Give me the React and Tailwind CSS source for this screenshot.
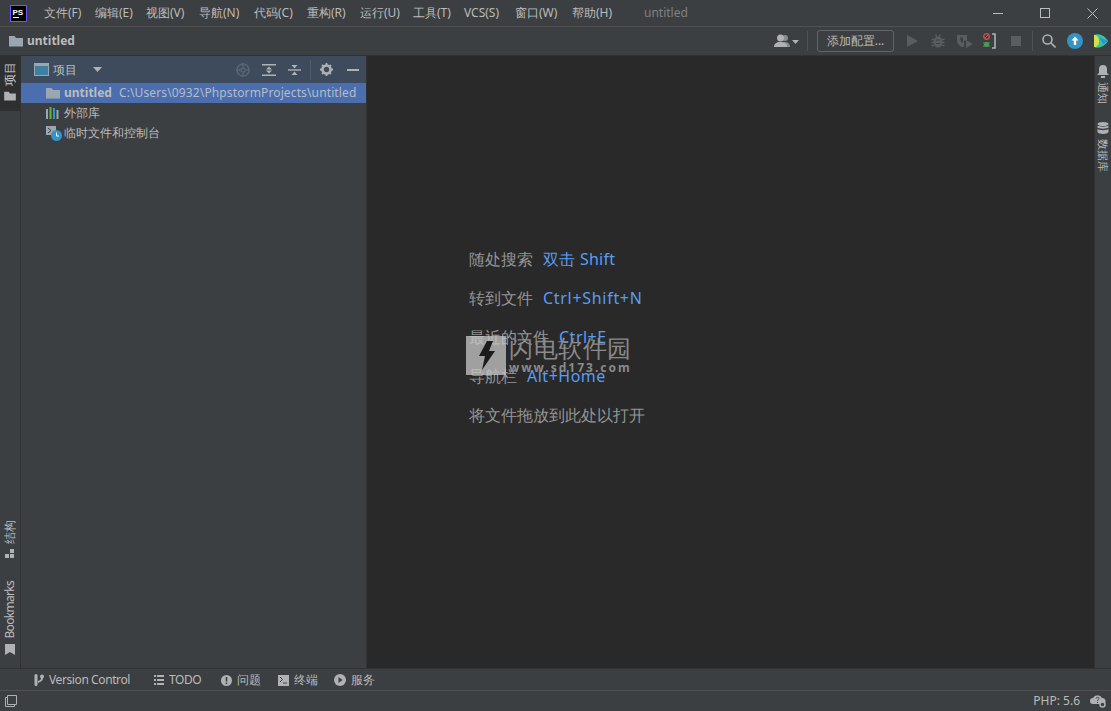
import React from 'react';

const menus = [
    ['文件(F)', 'w-[38px]'],
    ['编辑(E)', 'w-[38px]'],
    ['视图(V)', 'w-[40px]'],
    ['导航(N)', 'w-[42px]'],
    ['代码(C)', 'w-[40px]'],
    ['重构(R)', 'w-[40px]'],
    ['运行(U)', 'w-[40px]'],
    ['工具(T)', 'w-[38px]'],
    ['VCS(S)', 'w-[38px]'],
    ['窗口(W)', 'w-[44px]'],
    ['帮助(H)', 'w-[41px]'],
];

const FolderIcon = ({ className, color = '#9aa7b0' }) => (
    <svg className={className} viewBox="0 0 14 12" fill={color}>
        <path d="M0 1h5.500l1.500 2h7v8.500H0z" />
    </svg>
);

const PsLogo = () => (
    <svg className="w-[17px] h-[17px]" viewBox="0 0 17 17">
        <rect x="0.500" y="0.500" width="16" height="16" fill="#000" stroke="#6b57ff" />
        <text x="2.500" y="9.500" fill="#fff" fontSize="8" fontWeight="700" fontFamily="Liberation Sans, sans-serif">PS</text>
        <rect x="3" y="12" width="6" height="1" fill="#fff" />
    </svg>
);

const HintRow = ({ label, keys, track = 'tracking-[0.5px]' }) => (
    <div className="flex h-6 items-center text-base leading-6">
        <span className="text-[#969696]">{label}</span>
        <span className={`ml-[10px] ${track} text-[#589df6]`}>{keys}</span>
    </div>
);

const BottomTab = ({ icon, label, className, textClass }) => (
    <div className={`flex items-center gap-[5px] ${className}`}>
        {icon}
        <span className={textClass}>{label}</span>
    </div>
);

const App = () => {
    return (
        <div className="relative flex h-[711px] w-[1111px] flex-col overflow-hidden bg-[#3c3f41] text-xs text-[#bbbbbb] [font-family:'Open_Sans','Noto_Sans_CJK_SC',sans-serif]">

            {/* Title bar */}
            <div className="flex h-[27px] shrink-0 items-center border-b border-[#515151] pl-[10px]">
                <PsLogo />
                <div className="ml-[17px] flex gap-[13px]">
                    {menus.map(([m, w]) => <span key={m} className={`${w} whitespace-nowrap`}>{m}</span>)}
                </div>
                <span className="ml-[31px] text-[#808080]">untitled</span>
                <div className="ml-auto flex items-center">
                    <svg className="h-[11px] w-[11px]" viewBox="0 0 11 11" stroke="#bbb" fill="none"><path d="M0 5.500h10" /></svg>
                    <svg className="ml-[36px] h-[11px] w-[11px]" viewBox="0 0 11 11" stroke="#bbb" fill="none"><rect x="0.500" y="0.500" width="9" height="9" /></svg>
                    <svg className="ml-[36px] mr-[13px] h-[11px] w-[11px]" viewBox="0 0 11 11" stroke="#bbb" fill="none"><path d="M0.500 0.500l10 10M10.500 0.500l-10 10" /></svg>
                </div>
            </div>

            {/* Navigation bar */}
            <div className="flex h-[29px] shrink-0 items-center border-b border-[#323232] pl-[9px]">
                <FolderIcon className="h-3 w-[14px]" />
                <span className="ml-[4px] font-bold">untitled</span>
                <div className="ml-auto flex items-center">
                    <svg className="h-[14px] w-[26px]" viewBox="0 0 26 14" fill="#afb1b3">
                        <circle cx="11" cy="4" r="3" fill="#8a8d8f" />
                        <path d="M8 13c0-3 1-5 3-5s5 1 5 5z" fill="#8a8d8f" />
                        <circle cx="6.500" cy="4" r="3.500" />
                        <path d="M0 13c0-3 2-5 6.500-5S13 10 13 13z" />
                        <path d="M18 6h7l-3.500 4z" />
                    </svg>
                    <div className="ml-[7px] h-5 w-px bg-[#515151]" />
                    <div className="ml-[9px] flex h-[22px] w-[77px] items-center justify-center rounded-[3px] border border-[#646464]">添加配置...</div>
                    <svg className="ml-[13px] h-3 w-[11px]" viewBox="0 0 11 12" fill="#5a5d5f"><path d="M0 0l11 6-11 6z" /></svg>
                    <svg className="ml-[13px] h-[14px] w-[14px]" viewBox="0 0 14 14" fill="#5a5d5f">
                        <path d="M4.500 0.500l1.500 2.500M9.500 0.500L8 3" stroke="#5a5d5f" strokeWidth="1.300" fill="none" />
                        <ellipse cx="7" cy="8" rx="4.500" ry="5.500" />
                        <path d="M0.500 5.500h2.500M11 5.500h2.500M0.500 8.500h2.500M11 8.500h2.500M0.500 11.500h2.500M11 11.500h2.500" stroke="#5a5d5f" strokeWidth="1.300" />
                        <path d="M5 6h4M5 9.500h4" stroke="#3c3f41" />
                    </svg>
                    <svg className="ml-[12px] h-[14px] w-4" viewBox="0 0 16 14" fill="#5a5d5f">
                        <path d="M0 1h10v5L7 7v6H5C2 12 0 9 0 6z" />
                        <path d="M3 3.500h3V9l-2-1z" fill="#3c3f41" />
                        <path d="M9 6l7 4-7 4z" />
                    </svg>
                    <svg className="ml-[10px] h-4 w-[13px]" viewBox="0 0 13 16" fill="none">
                        <circle cx="3.500" cy="3.500" r="2.800" stroke="#c75450" strokeWidth="1.300" />
                        <path d="M1.500 5.500l4-4" stroke="#c75450" />
                        <circle cx="3.500" cy="11.500" r="2.500" fill="#499c54" />
                        <path d="M0 10h7M0 13h7" stroke="#499c54" />
                        <path d="M9 1h3v14H9" stroke="#afb1b3" strokeWidth="1.600" />
                    </svg>
                    <div className="ml-[15px] h-[10px] w-[10px] bg-[#5a5d5f]" />
                    <div className="ml-[11px] h-5 w-px bg-[#515151]" />
                    <svg className="ml-[9px] h-[14px] w-[14px]" viewBox="0 0 14 14" fill="none" stroke="#afb1b3" strokeWidth="1.600">
                        <circle cx="5.500" cy="5.500" r="4.500" />
                        <path d="M9 9l4.500 4.500" />
                    </svg>
                    <svg className="ml-[11px] h-4 w-4" viewBox="0 0 16 16">
                        <circle cx="8" cy="8" r="8" fill="#3592c4" />
                        <path d="M8 3.500l3.500 4H9.200V12H6.800V7.500H4.500z" fill="#fff" />
                    </svg>
                    <svg className="ml-[11px] mr-[3px] h-[14px] w-[14px]" viewBox="0 0 14 14">
                        <path d="M0 1c5-2 11 1 14 6-3 5-9 8-14 6z" fill="#35c6a0" />
                        <path d="M0 1c3 0 5 2 5 6s-2 6-5 6z" fill="#d7e04a" />
                        <path d="M5 3l9 4-5 3z" fill="#2f8fe0" />
                    </svg>
                </div>
            </div>

            {/* Main area */}
            <div className="flex min-h-0 flex-1">

                {/* Left tool strip */}
                <div className="flex w-[21px] shrink-0 flex-col border-r border-[#323232]">
                    <div className="flex h-[55px] flex-col items-center gap-[5px] bg-[#2d2f30] pt-[6px] text-[#d0d0d0]">
                        <span className="rotate-180 leading-none [text-orientation:sideways] [writing-mode:vertical-rl]">项目</span>
                        <FolderIcon className="h-[10px] w-3" color="#afb1b3" />
                    </div>
                    <div className="mt-auto flex flex-col items-center pb-[13px]">
                        <span className="rotate-180 leading-none [text-orientation:sideways] [writing-mode:vertical-rl]">结构</span>
                        <svg className="mt-[5px] h-[10px] w-[10px]" viewBox="0 0 10 10" fill="#afb1b3">
                            <rect x="5" y="0" width="4" height="4" /><rect x="0" y="5" width="4" height="4" /><rect x="5" y="5" width="4" height="4" />
                        </svg>
                        <span className="mt-[22px] rotate-180 leading-none tracking-[-0.7px] [text-orientation:sideways] [writing-mode:vertical-rl]">Bookmarks</span>
                        <svg className="mt-[6px] h-[11px] w-[10px]" viewBox="0 0 10 11" fill="#afb1b3"><path d="M0 0h10v11L5 8l-5 3z" /></svg>
                    </div>
                </div>

                {/* Project panel */}
                <div className="flex w-[345px] shrink-0 flex-col">
                    <div className="flex h-[27px] shrink-0 items-center bg-[#3d4b5c] pl-[13px]">
                        <svg className="h-[13px] w-[15px]" viewBox="0 0 15 13">
                            <rect x="0.500" y="0.500" width="14" height="12" fill="#3f7f9f" stroke="#9aa7b0" />
                            <rect x="1" y="1" width="13" height="2" fill="#9aa7b0" />
                        </svg>
                        <span className="ml-[4px]">项目</span>
                        <svg className="ml-[16px] h-[5px] w-[9px]" viewBox="0 0 9 5" fill="#afb1b3"><path d="M0 0h9L4.500 5z" /></svg>
                        <div className="ml-auto flex items-center pr-[7px]">
                            <svg className="h-[14px] w-[14px]" viewBox="0 0 14 14" fill="none" stroke="#5c6672" strokeWidth="1.500">
                                <circle cx="7" cy="7" r="6" /><circle cx="7" cy="7" r="2" /><path d="M7 0v4M7 10v4M0 7h4M10 7h4" />
                            </svg>
                            <svg className="ml-[12px] h-3 w-[14px]" viewBox="0 0 14 12" fill="#afb1b3">
                                <rect width="14" height="1.500" /><rect y="10.500" width="14" height="1.500" /><path d="M7 2.500L10 5.500H4zM7 9.500L4 6.500h6z" />
                            </svg>
                            <svg className="ml-[12px] h-3 w-[13px]" viewBox="0 0 13 12" fill="#afb1b3">
                                <rect y="5.300" width="13" height="1.400" /><path d="M6.500 4.500L3.500 1h6zM6.500 7.500l3 3.500h-6z" />
                            </svg>
                            <div className="ml-[9px] h-5 w-px bg-[#515b68]" />
                            <svg className="ml-[9px] h-[13px] w-[13px]" viewBox="0 0 13 13">
                                <circle cx="6.500" cy="6.500" r="4" fill="none" stroke="#afb1b3" strokeWidth="2.600" />
                                <path d="M6.500 0v13M0 6.500h13M2 2l9 9M11 2l-9 9" stroke="#afb1b3" strokeWidth="1.800" strokeDasharray="2 9 2" />
                            </svg>
                            <div className="ml-[14px] h-[2px] w-3 bg-[#afb1b3]" />
                        </div>
                    </div>
                    <div className="flex h-5 shrink-0 items-center bg-[#4b6eaf] pl-[25px]">
                        <FolderIcon className="h-3 w-[14px]" />
                        <span className="ml-[4px] font-bold">untitled</span>
                        <span className="ml-[7px] tracking-[0.13px] text-[#b6bcc5]">C:\Users\0932\PhpstormProjects\untitled</span>
                    </div>
                    <div className="flex h-5 shrink-0 items-center pl-[25px]">
                        <svg className="h-3 w-[14px]" viewBox="0 0 14 12">
                            <rect x="0" y="2" width="2" height="10" fill="#9aa7b0" />
                            <rect x="3.500" y="0" width="2" height="12" fill="#62b543" />
                            <rect x="7" y="1" width="2" height="11" fill="#3592c4" />
                            <rect x="10.500" y="3" width="2" height="9" fill="#9aa7b0" />
                        </svg>
                        <span className="ml-[4px]">外部库</span>
                    </div>
                    <div className="flex h-5 shrink-0 items-center pl-[25px]">
                        <svg className="h-[15px] w-[16px]" viewBox="0 0 16 15">
                            <rect x="0" y="0" width="10" height="9" fill="#9aa7b0" />
                            <path d="M2 2l3 2.500L2 7" fill="none" stroke="#3c3f41" />
                            <circle cx="10.500" cy="9.500" r="5.500" fill="#3592c4" />
                            <path d="M10.500 6.500v3.500h2.500" fill="none" stroke="#fff" />
                        </svg>
                        <span className="ml-[2px]">临时文件和控制台</span>
                    </div>
                </div>

                {/* Editor placeholder */}
                <div className="flex flex-1 flex-col gap-[15px] border-l border-[#323232] bg-[#292929] pl-[102px] pt-[191px]">
                    <HintRow label="随处搜索" keys="双击 Shift" track="tracking-[0.25px]" />
                    <HintRow label="转到文件" keys="Ctrl+Shift+N" track="tracking-[0.7px]" />
                    <HintRow label="最近的文件" keys="Ctrl+E" />
                    <HintRow label="导航栏" keys="Alt+Home" />
                    <div className="flex h-6 items-center text-base leading-6 text-[#969696]">将文件拖放到此处以打开</div>
                </div>

                {/* Right tool strip */}
                <div className="flex w-[17px] shrink-0 flex-col items-center border-l border-[#323232] pt-[9px] text-[11px]">
                    <svg className="h-[13px] w-3" viewBox="0 0 12 13" fill="#afb1b3">
                        <path d="M6 0c3 0 4 2 4 4v4l2 2H0l2-2V4c0-2 1-4 4-4z" /><rect x="4" y="11" width="4" height="2" />
                    </svg>
                    <span className="mt-[4px] leading-none [text-orientation:sideways] [writing-mode:vertical-rl]">通知</span>
                    <svg className="mt-[18px] h-3 w-3" viewBox="0 0 12 12" fill="#afb1b3">
                        <ellipse cx="6" cy="2" rx="5.500" ry="2" /><path d="M0.500 3.500c1 1.500 10 1.500 11 0v2c-1 1.500-10 1.500-11 0zM0.500 7c1 1.500 10 1.500 11 0v3c-1 2.500-10 2.500-11 0z" />
                    </svg>
                    <span className="mt-[5px] leading-none [text-orientation:sideways] [writing-mode:vertical-rl]">数据库</span>
                </div>
            </div>

            {/* Bottom tool tabs */}
            <div className="flex h-[22px] shrink-0 items-center border-t border-[#323232] pl-[34px] pt-[1px]">
                <BottomTab
                    label="Version Control"
                    textClass="tracking-[-0.4px]"
                    icon={
                        <svg className="h-3 w-[10px]" viewBox="0 0 10 12" fill="#afb1b3">
                            <rect x="0.500" y="0" width="3" height="12" rx="1.500" />
                            <circle cx="8" cy="2.500" r="2" />
                            <path d="M7 4h2c0 3-3 4-5 5V7c2-.5 3-1.500 3-3z" />
                        </svg>
                    }
                />
                <BottomTab
                    className="ml-6"
                    label="TODO"
                    textClass="tracking-[-0.4px]"
                    icon={<svg className="h-[10px] w-[10px]" viewBox="0 0 10 10" fill="#afb1b3"><path d="M0 0h2v2H0zM3 0h7v2H3zM0 4h2v2H0zM3 4h7v2H3zM0 8h2v2H0zM3 8h7v2H3z" /></svg>}
                />
                <BottomTab
                    className="ml-5"
                    label="问题"
                    icon={<svg className="h-[11px] w-[11px]" viewBox="0 0 11 11"><circle cx="5.500" cy="5.500" r="5.500" fill="#afb1b3" /><rect x="4.700" y="2" width="1.600" height="4.500" fill="#3c3f41" /><rect x="4.700" y="7.500" width="1.600" height="1.600" fill="#3c3f41" /></svg>}
                />
                <BottomTab
                    className="ml-[17px]"
                    label="终端"
                    icon={<svg className="h-[11px] w-[11px]" viewBox="0 0 11 11"><rect width="11" height="11" fill="#afb1b3" /><path d="M2 2l2.500 2.500L2 7" fill="none" stroke="#3c3f41" /><path d="M5 8h4" stroke="#3c3f41" /></svg>}
                />
                <BottomTab
                    className="ml-4"
                    label="服务"
                    icon={<svg className="h-3 w-3" viewBox="0 0 12 12"><circle cx="6" cy="6" r="6" fill="#afb1b3" /><path d="M4.500 3l4 3-4 3z" fill="#3c3f41" /></svg>}
                />
            </div>

            {/* Status bar */}
            <div className="flex h-[21px] shrink-0 items-center border-t border-[#515151] pl-[5px]">
                <svg className="h-3 w-3" viewBox="0 0 12 12" fill="none" stroke="#afb1b3">
                    <path d="M2.500 0.500h9v9h-9zM2.500 2.500h-2v9h9v-2" />
                </svg>
                <span className="ml-auto">PHP: 5.6</span>
                <svg className="ml-[10px] mr-[5px] h-[14px] w-4" viewBox="0 0 16 14">
                    <path d="M3 10a3 3 0 0 1 0-6 5 5 0 0 1 9 0 3 3 0 0 1 1 6z" fill="#afb1b3" />
                    <path d="M6 4.500c0-1.500 3-1.500 3 0 0 1-1.500 1-1.500 2.500M7.500 8v1" fill="none" stroke="#3c3f41" />
                    <circle cx="12.500" cy="10.500" r="2.500" fill="#3c3f41" stroke="#afb1b3" strokeWidth="1.500" />
                </svg>
            </div>

            {/* Watermark over the editor */}
            <div className="absolute left-[466px] top-[336px] flex">
                <div className="flex h-[39px] w-10 items-center justify-center bg-[#c8c8c8]/75">
                    <svg className="h-[29px] w-[17px]" viewBox="0 0 17 29" fill="#1c1c1c"><path d="M9 0h6l-4 10h6L4 29l3-14H1z" /></svg>
                </div>
                <div className="ml-[3px] flex flex-col text-[#8a8a8a]">
                    <span className="text-2xl leading-[24px] tracking-[0.5px]">闪电软件园</span>
                    <span className="mt-[1px] text-xs font-bold leading-[14px] tracking-[2px] [font-family:'DejaVu_Sans',sans-serif]">www.sd173.com</span>
                </div>
            </div>
        </div>
    );
};

export default App;
